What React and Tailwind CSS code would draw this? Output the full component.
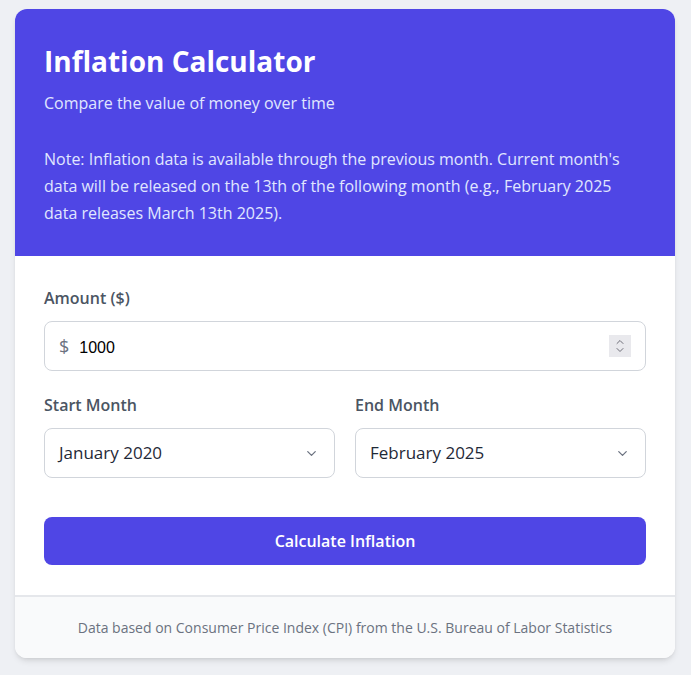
import React from 'react';
import { ChevronDown, ChevronUp } from 'lucide-react';

const MonthSelect = ({ label, value }) => (
  <div>
    <label className="block text-[16px] leading-5 font-semibold text-[#4b5563] mb-[13px]">{label}</label>
    <div className="h-[50px] flex items-center justify-between border border-[#d1d5db] rounded-lg bg-white pl-[14px] pr-[15px]">
      <span className="text-[17px] text-[#1f2937]">{value}</span>
      <ChevronDown className="w-[15px] h-[15px] text-[#6b7280]" strokeWidth={2} />
    </div>
  </div>
);

const App = () => {
  return (
    <div className="min-h-[675px] bg-[#eef0f4] pt-[9px] px-[15px] font-['Open_Sans',sans-serif]">
      <div className="w-[660px] bg-white rounded-xl shadow-md overflow-hidden">
        {/* Header */}
        <div className="bg-[#4f46e5] px-[29px] pt-[34px] pb-[29px]">
          <h1 className="text-[28px] leading-9 font-bold text-white">Inflation Calculator</h1>
          <p className="mt-[12px] text-[16px] leading-6 text-[#e0e7ff]">Compare the value of money over time</p>
          <p className="mt-[31px] text-[16px] leading-[27px] text-[#e0e7ff]">
            Note: Inflation data is available through the previous month. Current month's data will be released on the 13th of the following month (e.g., February 2025 data releases March 13th 2025).
          </p>
        </div>

        {/* Form */}
        <div className="px-[29px] pt-[32px] pb-[30px]">
          <label className="block text-[16px] leading-5 font-semibold text-[#4b5563] mb-[13px]">Amount ($)</label>
          <div className="h-[50px] flex items-center border border-[#d1d5db] rounded-lg bg-white pl-[14px] pr-[14px]">
            <span className="text-[18px] text-[#6b7280] mr-[10px]">$</span>
            <input
              type="text"
              readOnly
              value="1000"
              className="flex-1 outline-none bg-transparent pt-[3px] text-[16px] text-black font-['Liberation_Sans',sans-serif]"
            />
            <span className="w-[22px] h-[22px] bg-[#e9e9ed] flex flex-col items-center justify-center">
              <ChevronUp className="w-[12px] h-[12px] text-[#6e6e78] -mb-[2px]" strokeWidth={2} />
              <ChevronDown className="w-[12px] h-[12px] text-[#6e6e78] -mt-[2px]" strokeWidth={2} />
            </span>
          </div>

          <div className="grid grid-cols-2 gap-5 mt-[24px]">
            <MonthSelect label="Start Month" value="January 2020" />
            <MonthSelect label="End Month" value="February 2025" />
          </div>

          <button className="mt-[39px] w-full h-[48px] rounded-lg bg-[#4f46e5] text-white text-[16px] font-semibold">
            Calculate Inflation
          </button>
        </div>

        {/* Footer */}
        <div className="border-t-2 border-[#e5e7eb] bg-[#f9fafb] h-[63px] flex items-center justify-center">
          <p className="text-[14px] text-[#6b7280]">Data based on Consumer Price Index (CPI) from the U.S. Bureau of Labor Statistics</p>
        </div>
      </div>
    </div>
  );
};

export default App;
